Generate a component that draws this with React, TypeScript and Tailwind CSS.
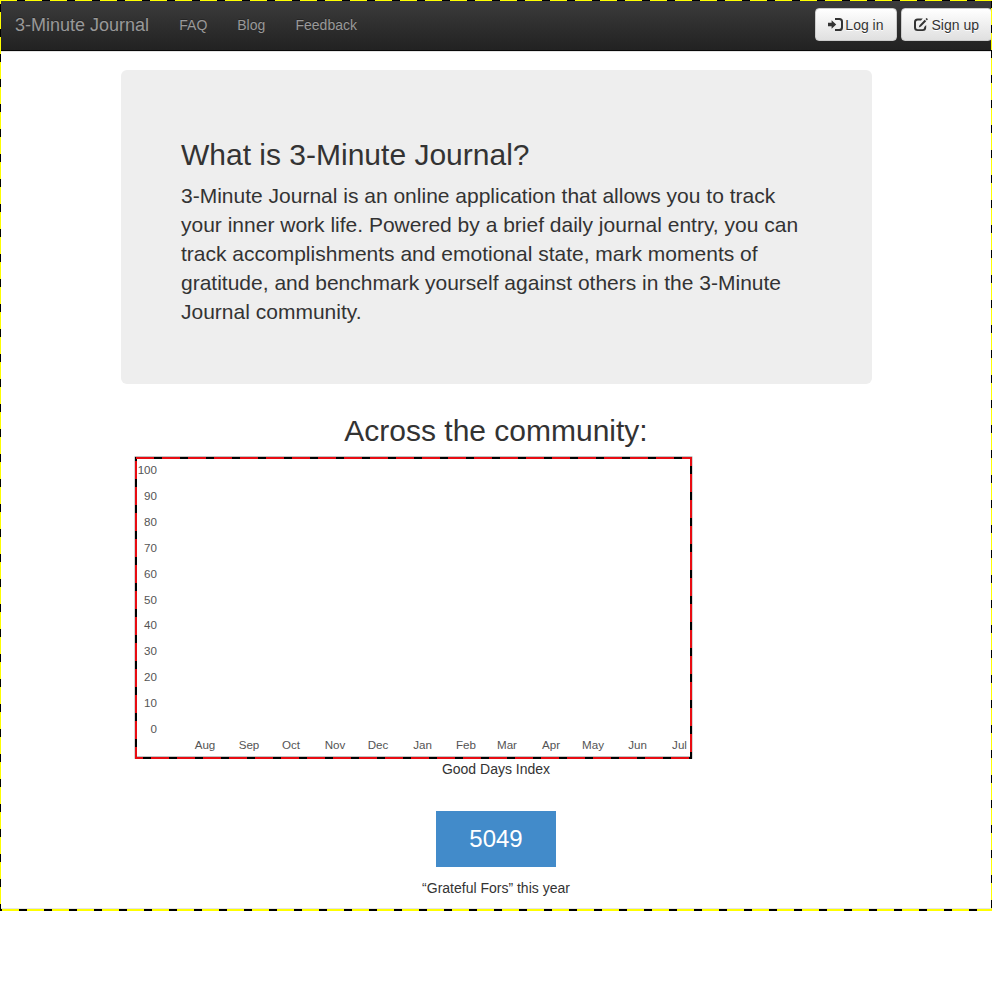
import React from 'react';

const months: [string, number][] = [
  ['Aug', 205], ['Sep', 249], ['Oct', 291], ['Nov', 335], ['Dec', 378], ['Jan', 422.5],
  ['Feb', 466], ['Mar', 507], ['Apr', 551], ['May', 593], ['Jun', 637.5], ['Jul', 679.5],
];
const values = [100, 90, 80, 70, 60, 50, 40, 30, 20, 10, 0];

function Chart() {
  return (
    <svg width="559" height="303" viewBox="134 456 559 303" className="block" fontSize="11.6" fill="#545454">
      <rect x="135.8" y="457.6" width="555.4" height="300" fill="none" stroke="#999" strokeWidth="2.4" />
      <rect x="136" y="458" width="555" height="300" fill="none" stroke="#000" strokeWidth="2" />
      <g stroke="#e80c12" strokeWidth="2" fill="none" strokeDasharray="18 8">
        <path d="M135 458H692" strokeDashoffset="-1" />
        <path d="M691 457V759" strokeDashoffset="9" />
        <path d="M135 758H692" strokeDashoffset="10" />
        <path d="M136 457V759" strokeDashoffset="-4" />
      </g>
      {values.map((v, i) => (
        <text key={v} x="157" y={474 + i * 25.9} textAnchor="end">{v}</text>
      ))}
      {months.map(([m, x]) => (
        <text key={m} x={x} y="749" textAnchor="middle">{m}</text>
      ))}
    </svg>
  );
}

function LoginIcon() {
  return (
    <svg width="15" height="14" viewBox="0 0 15 14" className="mr-[2px]" fill="#333">
      <path d="M0 4.8h3.6V2.2l4.6 4.3-4.6 4.3V8.3H0z" />
      <path d="M7 0h4.4Q15 0 15 3.6v5.8Q15 13 11.4 13H7v-2h4.2q1.8 0 1.8-1.8V3.8Q13 2 11.2 2H7z" />
    </svg>
  );
}

function EditIcon() {
  return (
    <svg width="14" height="14" viewBox="0 0 14 14" className="mr-[4px]" fill="#333">
      <path d="M8.8 .5H3.6Q0 .5 0 4v5.5Q0 13 3.6 13h5q3.6 0 3.6-3.5V7l-2 2v.5q0 1.7-1.7 1.7H3.7Q2 11.2 2 9.5V4.1Q2 2.4 3.7 2.4H7z" />
      <path d="M10.7 1.8l1.5 1.4-5.2 5.4-2.2.9.7-2.3zM11.5 1l.8-.8q.3-.3.7 0l.7.7q.3.3 0 .7l-.8.8z" />
    </svg>
  );
}

const button = "flex h-[33px] items-center rounded-[4px] border border-[#ccc] bg-linear-to-b from-white to-[#e0e0e0] px-3 text-[14px] text-[#333] [text-shadow:0_1px_0_#fff] whitespace-nowrap";

export default function App() {
  return (
    <div className="relative h-[911px] w-[992px] overflow-hidden bg-white font-['Liberation_Sans',Arial,sans-serif] text-[14px] leading-5 text-[#333]">
      <nav className="flex h-[51px] items-start border-b border-[#080808] bg-linear-to-b from-[#3c3c3c] to-[#222] pl-[15px] text-[#999] shadow-[0_1px_0_#e5e5e5] [text-shadow:0_-1px_0_rgba(0,0,0,.25)]">
        <a className="pt-[15px] text-[18px]">3-Minute Journal</a>
        <a className="ml-[30.2px] pt-[15px]">FAQ</a>
        <a className="ml-[30px] pt-[15px]">Blog</a>
        <a className="ml-[30.2px] pt-[15px]">Feedback</a>
        <div className="mt-2 ml-auto flex gap-1">
          <button className={button}><LoginIcon />Log in</button>
          <button className={button}><EditIcon />Sign up</button>
        </div>
      </nav>
      <main>
        <section className="mt-[19px] ml-[121px] h-[314px] w-[751px] rounded-[6px] bg-[#eee] px-[60px] pt-[68px]">
          <h1 className="text-[30px] leading-[33px]">What is 3-Minute Journal?</h1>
          <p className="mt-[10px] text-[21px] leading-[29px]">
            3-Minute Journal is an online application that allows you to track<br />
            your inner work life. Powered by a brief daily journal entry, you can<br />
            track accomplishments and emotional state, mark moments of<br />
            gratitude, and benchmark yourself against others in the 3-Minute<br />
            Journal community.
          </p>
        </section>
        <section className="text-center">
          <h2 className="mt-[30px] text-[30px] leading-[33px]">Across the community:</h2>
          <div className="mt-[9px] ml-[134px] h-[303px]"><Chart /></div>
          <p>Good Days Index</p>
          <div className="mx-auto mt-8 flex h-14 w-[120px] items-center justify-center bg-[#428bca] text-[24px] text-white">5049</div>
          <p className="mt-[11px]">“Grateful Fors” this year</p>
        </section>
      </main>
      <svg width="992" height="911" className="pointer-events-none absolute top-0 left-0" fill="none" shapeRendering="crispEdges">
        <path d="M0 908.5H992" stroke="#e5e5e5" />
        <path d="M0 .5H992M.5 0V911M991.5 0V911" stroke="#000" />
        <path d="M0 910H992" stroke="#000" strokeWidth="2" />
        <g stroke="#ff0" strokeDasharray="17 8">
          <path d="M0 .5H992" />
          <path d="M.5 0V911" strokeDashoffset="13" />
          <path d="M991.5 0V911" strokeDashoffset="17" />
          <path d="M2 910H992" strokeWidth="2" />
        </g>
      </svg>
    </div>
  );
}
